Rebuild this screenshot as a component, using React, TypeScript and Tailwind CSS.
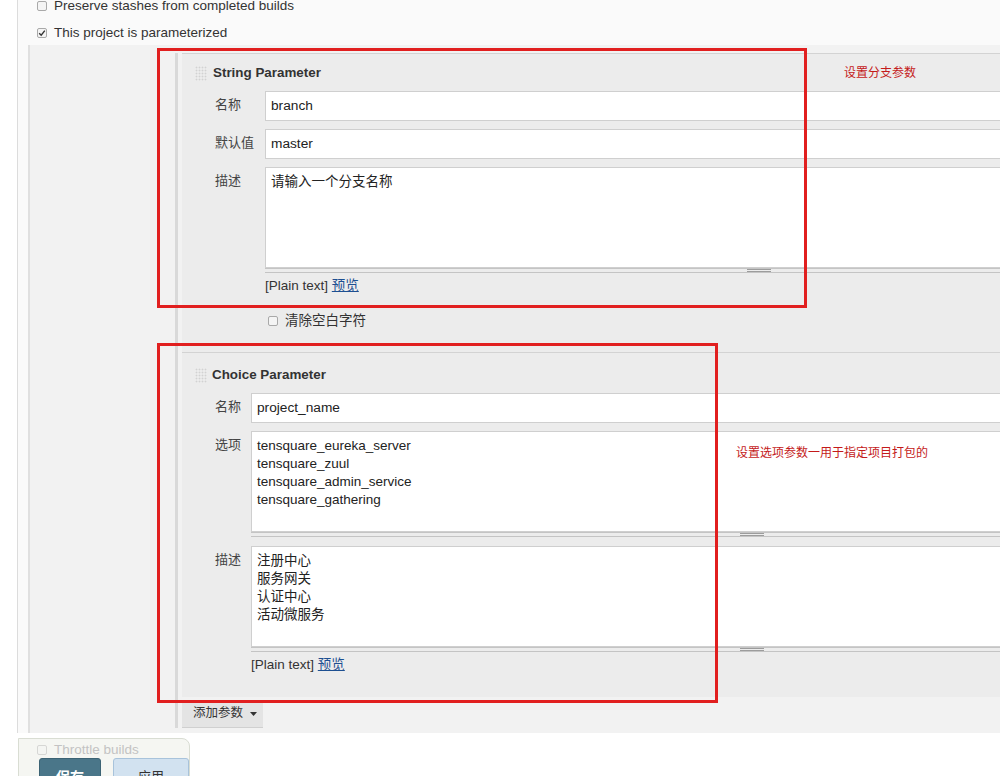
import React from 'react'

const font = { fontFamily: '"Liberation Sans", "Noto Sans CJK SC", sans-serif' }

function Box({ checked, faded }: { checked?: boolean; faded?: boolean }) {
  return (
    <span
      className={`inline-flex items-center justify-center w-[10px] h-[10px] rounded-[2px] border border-[#a9a9a9] bg-[#f4f4f4] ${faded ? 'opacity-40' : ''}`}
    >
      {checked && (
        <svg width="8" height="8" viewBox="0 0 8 8">
          <path d="M1.2 4.2 L3.2 6.2 L6.8 1.6" fill="none" stroke="#333" strokeWidth="1.4" />
        </svg>
      )}
    </span>
  )
}

function Grip() {
  const dots = []
  for (let r = 0; r < 5; r++)
    for (let c = 0; c < 4; c++)
      dots.push(<rect key={`${r}-${c}`} x={c * 3 + 0.5} y={r * 3 + 0.5} width="2" height="2" fill="#d2d2d2" />)
  return (
    <svg width="12" height="15" viewBox="0 0 12 15" className="shrink-0">
      <rect x="0" y="0" width="12" height="15" fill="#f4f4f4" />
      {dots}
    </svg>
  )
}

function Field({ label, value, labelW }: { label: string; value: string; labelW: string }) {
  return (
    <div className="flex">
      <div className={`${labelW} shrink-0 pt-[4px] text-[13px] text-[#444]`}>{label}</div>
      <div className="flex-1 h-[30px] border border-[#cfcfcf] bg-white flex items-center px-[5px] text-[13.7px] text-[#222]">
        {value}
      </div>
    </div>
  )
}

function Area({ label, lines, labelW }: { label: string; lines: string[]; labelW: string }) {
  return (
    <div className="flex">
      <div className={`${labelW} shrink-0 pt-[4px] text-[13px] text-[#444]`}>{label}</div>
      <div className="flex-1">
        <div className="h-[101px] border border-[#cfcfcf] bg-white px-[5px] pt-[5px] text-[13.5px] leading-[18px] text-[#222]">
          {lines.map(l => (
            <div key={l}>{l}</div>
          ))}
        </div>
        <div className="relative h-[5px] border-y border-[#c4c4c4] bg-[#ececec]">
          <div className="absolute left-1/2 -translate-x-1/2 top-0 w-[24px] h-[3px] border-y border-[#9c9c9c]" />
        </div>
      </div>
    </div>
  )
}

function PlainText({ ml }: { ml: string }) {
  return (
    <div className={`${ml} h-[16px] flex items-center text-[13.5px] text-[#333]`}>
      [Plain text]&nbsp;<span className="text-[#1d4f91] underline">预览</span>
    </div>
  )
}

export default function App() {
  return (
    <div style={font} className="relative w-[1000px] h-[776px] overflow-hidden bg-white">
      <div className="ml-[17px] w-[1300px] border-l border-[#dcdcdc] bg-[#fafafa]">
        {/* top options */}
        <div className="-mt-[4px] h-[20px] pl-[19px] flex items-center gap-[7px] text-[13.5px] text-[#333]">
          <Box />
          <span>Preserve stashes from completed builds</span>
        </div>
        <div className="mt-[7px] h-[20px] pl-[19px] flex items-center gap-[7px] text-[13.5px] text-[#333]">
          <Box checked />
          <span>This project is parameterized</span>
        </div>

        {/* parameter block */}
        <div className="mt-[2px] ml-[10px] border-l-2 border-[#e0e0e0] bg-[#f2f2f2] pt-[8px] pb-[5px]">
          <div className="ml-[145px] border-l-[3px] border-[#d9d9d9] pl-[4px]">
            {/* String Parameter */}
            <div className="w-[1083px] h-[299px] border-t border-[#d3d3d3] bg-[#ececec] pl-[13px] pr-[12px]">
              <div className="mt-[9px] h-[20px] flex items-center gap-[6px]">
                <Grip />
                <span className="text-[13.4px] font-bold text-[#333]">String Parameter</span>
              </div>
              <div className="mt-[8px] pl-[20px] flex flex-col gap-[8px]">
                <Field label="名称" value="branch" labelW="w-[50px]" />
                <Field label="默认值" value="master" labelW="w-[50px]" />
                <Area label="描述" lines={['请输入一个分支名称']} labelW="w-[50px]" />
              </div>
              <div className="mt-[5px]">
                <PlainText ml="ml-[70px]" />
              </div>
              <div className="mt-[19px] ml-[73px] h-[16px] flex items-center gap-[7px] text-[13.5px] text-[#333]">
                <Box />
                <span>清除空白字符</span>
              </div>
            </div>

            {/* Choice Parameter */}
            <div className="w-[1083px] h-[345px] border-t border-[#d3d3d3] bg-[#ececec] pl-[13px] pr-[12px]">
              <div className="mt-[12px] h-[20px] flex items-center gap-[5px]">
                <Grip />
                <span className="text-[13.4px] font-bold text-[#333]">Choice Parameter</span>
              </div>
              <div className="mt-[8px] pl-[20px] flex flex-col gap-[8px]">
                <Field label="名称" value="project_name" labelW="w-[36px]" />
                <Area
                  label="选项"
                  lines={['tensquare_eureka_server', 'tensquare_zuul', 'tensquare_admin_service', 'tensquare_gathering']}
                  labelW="w-[36px]"
                />
                <div className="mt-[1px]">
                  <Area label="描述" lines={['注册中心', '服务网关', '认证中心', '活动微服务']} labelW="w-[36px]" />
                </div>
              </div>
              <div className="mt-[5px]">
                <PlainText ml="ml-[56px]" />
              </div>
            </div>

            <div className="mt-[3px] w-[81px] h-[28px] bg-[#e4e4e4] border-b border-[#d0d0d0] flex items-center pl-[11px] gap-[7px] text-[12.5px] text-[#333]">
              <span>添加参数</span>
              <svg width="7" height="4" viewBox="0 0 7 4">
                <path d="M0 0 H7 L3.5 4 Z" fill="#333" />
              </svg>
            </div>
          </div>
        </div>
      </div>

      {/* annotations */}
      <div className="absolute left-[157px] top-[48px] w-[650px] h-[260px] border-[3px] border-[#e11f1f]" />
      <div className="absolute left-[157px] top-[343px] w-[561px] h-[360px] border-[3px] border-[#e11f1f]" />
      <div className="absolute left-[844px] top-[64px] text-[12px] text-[#c41a1a]">设置分支参数</div>
      <div className="absolute left-[736px] top-[444px] text-[12px] text-[#c41a1a]">设置选项参数一用于指定项目打包的</div>

      {/* sticky footer */}
      <div className="absolute left-[18px] top-[738px] w-[172px] h-[50px] rounded-tr-[8px] border border-[#d9ddd3] bg-[#f5f6f2]">
        <div className="mt-[3px] ml-[18px] h-[16px] flex items-center gap-[7px] text-[13.5px] text-[#c3c3c3]">
          <Box faded />
          <span>Throttle builds</span>
        </div>
        <div className="mt-[0px] ml-[20px] flex gap-[12px]">
          <div className="w-[62px] h-[30px] rounded-t-[3px] bg-[#4a7689] border border-[#3c6374] flex justify-center pt-[8px] text-[14px] font-bold text-white">
            保存
          </div>
          <div className="w-[76px] h-[30px] rounded-t-[3px] bg-[#d2e2f0] border border-[#a8c3db] flex justify-center pt-[8px] text-[13px] text-[#333]">
            应用
          </div>
        </div>
      </div>
    </div>
  )
}
